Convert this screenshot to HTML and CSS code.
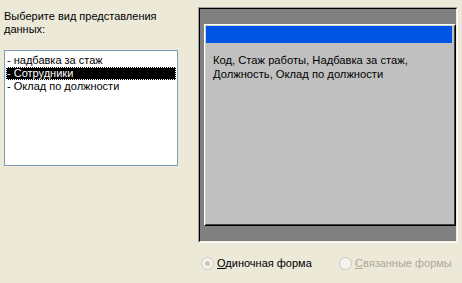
FILE: index.html
```html
<!DOCTYPE html>
<html>
<head>
<meta charset="utf-8">
<title>Мастер форм</title>
<link rel="stylesheet" href="styles.css">
</head>
<body>
	<div class="dialog">
		<!-- список представлений -->
		<div class="left">
			<p class="prompt">Выберите вид представления данных:</p>
			<ul class="list">
				<li>- надбавка за стаж</li>
				<li class="selected">- Сотрудники</li>
				<li>- Оклад по должности</li>
			</ul>
		</div>

		<!-- предпросмотр формы -->
		<div class="right">
			<div class="preview">
				<div class="preview-in">
					<div class="form">
						<div class="form-in">
							<div class="titlebar"></div>
							<p class="fields">Код, Стаж работы, Надбавка за стаж, Должность, Оклад по должности</p>
						</div>
					</div>
				</div>
			</div>
			<div class="choices">
				<label class="choice">
					<span class="radio checked"></span>
					<span class="caption"><u>О</u>диночная форма</span>
				</label>
				<label class="choice disabled">
					<span class="radio"></span>
					<span class="caption"><u>С</u>вязанные формы</span>
				</label>
			</div>
		</div>
	</div>
</body>
</html>
```
FILE: styles.css
```css
html, body {
	margin: 0;
	padding: 0;
	background-color: #ece9d8;
}

body {
	font-family: "Liberation Sans", Arial, sans-serif;
	font-size: 11px;
	line-height: 13px;
	color: #000;
}

.dialog {
	display: flex;
	height: 283px;
}

.left {
	width: 174px;
	padding-left: 4px;
}

.prompt {
	margin: 10px 0 14px 0;
	width: 170px;
}

.list {
	list-style: none;
	margin: 0;
	padding: 3px 1px 0 1px;
	height: 111px;
	border: 1px solid #7f9db9;
	background-color: #fff;
}

.list li {
	height: 13px;
	padding-left: 1px;
	white-space: nowrap;
}

.list li.selected {
	background-color: #000;
	color: #fff;
	outline: 1px dotted #fff;
	outline-offset: -1px;
}

.right {
	margin-left: 20px;
	width: 260px;
	padding-top: 7px;
}

.preview {
	border: 1px solid;
	border-color: #a0a0a0 #fff #fff #a0a0a0;
}

.preview-in {
	border: 1px solid;
	border-color: #000 #f1efe2 #f1efe2 #000;
	background-color: #808080;
	padding: 15px 0 15px 4px;
}

.form {
	border: 1px solid;
	border-color: #fff #000 #000 #fff;
	height: 200px;
}

.form-in {
	border: 1px solid;
	border-color: #d4d0c8 #404040 #404040 #d4d0c8;
	background-color: #c0c0c0;
	height: 198px;
	padding-right: 2px;
}

.titlebar {
	height: 17px;
	background-color: #0054e3;
}

.fields {
	margin: 10px 0 0 7px;
	width: 215px;
	font-size: 11.2px;
	line-height: 14px;
}

.choices {
	display: flex;
	padding: 14px 0 0 3px;
}

.choice {
	flex: none;
	display: flex;
	align-items: center;
	gap: 3px;
	width: 138px;
}

.radio {
	width: 11px;
	height: 11px;
	border: 1px solid #cac8bb;
	border-radius: 50%;
	background-color: #f4f3ee;
	display: flex;
	align-items: center;
	justify-content: center;
}

.radio.checked::after {
	content: "";
	width: 5px;
	height: 5px;
	border-radius: 50%;
	background-color: #cac8bb;
}

.disabled .caption {
	color: #aca899;
}
```
